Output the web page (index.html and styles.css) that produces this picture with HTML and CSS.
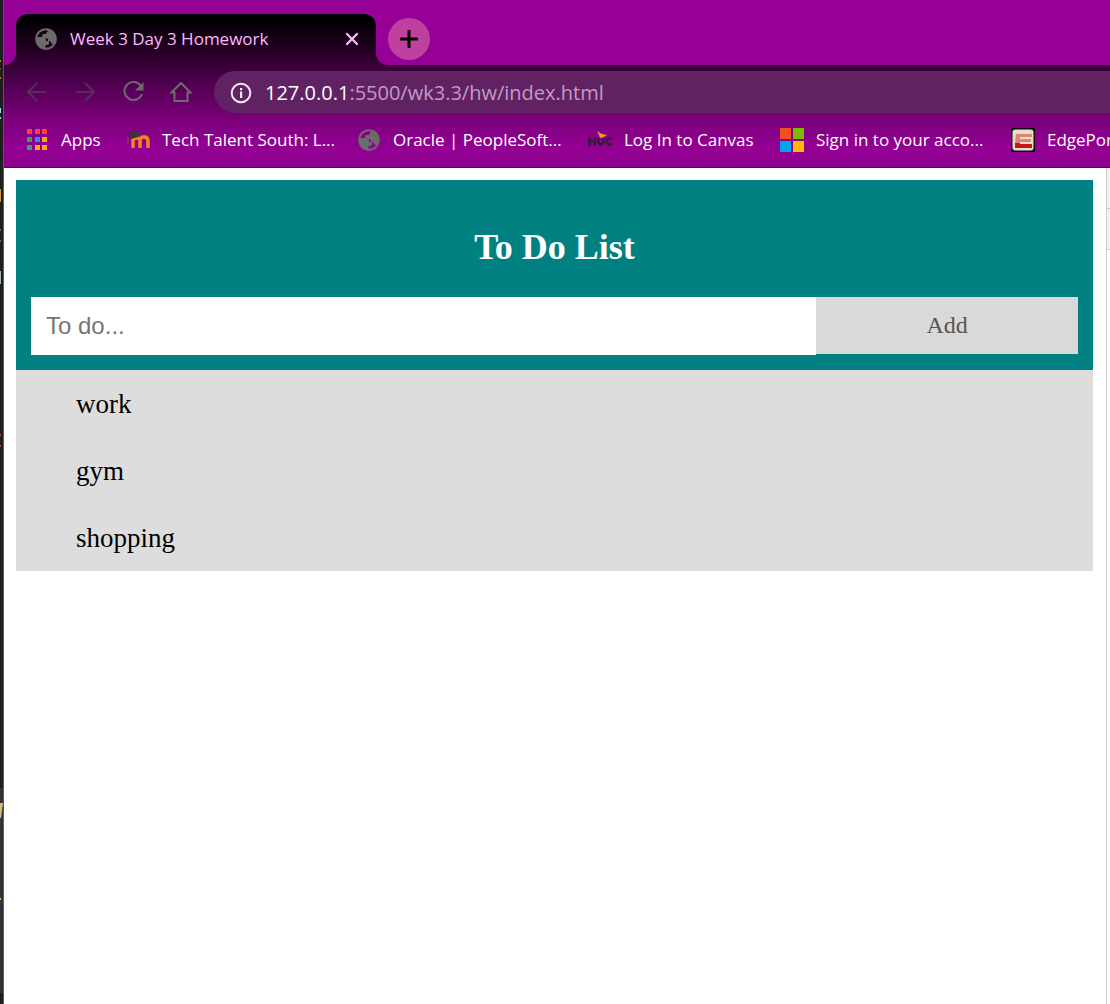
FILE: index.html
```
<!DOCTYPE html>
<html lang="en">
<head>
<meta charset="utf-8">
<title>Week 3 Day 3 Homework</title>
<link rel="stylesheet" href="styles.css">
</head>
<body>
<svg width="0" height="0" class="defs" aria-hidden="true">
  <symbol id="globe" viewBox="0 0 24 24">
    <circle cx="12" cy="12" r="9.800" fill="none" stroke="#6b6b6b" stroke-width="2"/>
    <path fill="#6b6b6b" d="M2 10h5q5 0 5 4h3v2.500q0 1.500-2 1.500h-1.500v4.500Q3 21 2 12zM13 2q8 1 9.500 9-1 4-3 6-3 0-3-3h-2.500v-2.500H10q-2 0-2-2.500 0-2 2-2h2q0-2 1.500-2z"/>
  </symbol>
</svg>
<div class="desktop">
  <svg class="editor-edge" viewBox="0 0 3 1004" width="3" height="1004" aria-hidden="true">
    <path fill="#1e1e1e" d="M0 0h3v1004H0z"/>
    <path fill="#333337" d="M0 788h3v205H0z"/>
    <path fill="#b8860b" d="M0 60h1v2H0zM0 77h1v2H0z"/>
    <path fill="#9b2d1f" d="M0 68h1v2H0z"/>
    <path fill="#9cdcfe" d="M0 108h1v5H0zM0 117h1v2H0z"/>
    <path fill="#d19a2e" d="M0 189h1v13H0z"/>
    <path fill="#6a7d20" d="M0 229h1v2H0zM0 240h1v2H0z"/>
    <path fill="#9db8a5" d="M0 271h1v13H0z"/>
    <path fill="#b5482a" d="M0 434h1v2H0zM0 445h1v2H0z"/>
    <path fill="#d7ba7d" d="M0 803h3l-2 15H0z"/>
    <path fill="#d7d060" d="M0 898h1v2H0z"/>
  </svg>
  <div class="browser">
    <header class="chrome">
      <div class="frame-top"></div>
      <div class="tabstrip">
        <div class="frame-left"></div>
        <div class="tab-slot">
          <div class="tab">
            <svg class="icon" aria-hidden="true"><use href="#globe"/></svg>
            <span class="tab-title">Week 3 Day 3 Homework</span>
            <button class="icon-button" type="button" aria-label="Close tab">
              <svg viewBox="0 0 14 14" width="14" height="14"><path d="M2 2l10 10M12 2L2 12" stroke="#ffb8ff" stroke-width="2.300" stroke-linecap="round"/></svg>
            </button>
          </div>
        </div>
        <div class="frame-right">
          <button class="new-tab" type="button" aria-label="New tab">
            <svg viewBox="0 0 18 18" width="18" height="18"><path d="M9 1v16M1 9h16" stroke="#000" stroke-width="3" stroke-linecap="round"/></svg>
          </button>
        </div>
      </div>
      <div class="toolbar">
        <button class="nav" type="button" aria-label="Back"><svg class="dim" viewBox="0 0 24 24"><path d="M21.500 12H3.500M12 3l-9 9 9 9"/></svg></button>
        <button class="nav" type="button" aria-label="Forward"><svg class="dim" viewBox="0 0 24 24"><path d="M2.500 12h18M12 3l9 9-9 9"/></svg></button>
        <button class="nav" type="button" aria-label="Reload"><svg viewBox="0 0 24 24"><path d="M20 6a9 9 0 1 0 1 8"/><path class="solid" d="M22.500 2v8.500H14z"/></svg></button>
        <button class="nav" type="button" aria-label="Home"><svg viewBox="0 0 24 24"><path d="M2.500 12.500L12 3l9.500 9.500H18.500v8.500h-13v-8.500z"/></svg></button>
        <div class="address">
          <svg viewBox="0 0 22 22" width="22" height="22" aria-hidden="true"><circle cx="11" cy="11" r="9.300" fill="none" stroke="#f3e9f3" stroke-width="2"/><path fill="#f3e9f3" d="M10 9.500h2.200V16H10zM10 6h2.200v2.200H10z"/></svg>
          <div class="url" role="textbox" aria-label="Address"><span class="host">127.0.0.1</span>:5500/wk3.3/hw/index.html</div>
        </div>
      </div>
      <nav class="bookmarks" aria-label="Bookmarks">
        <a href="#apps"><svg class="icon" viewBox="0 0 24 24"><path fill="#ff4136" d="M2 1h5v5H2zM10 1h5v5h-5zM17 1h5v5h-5z"/><path fill="#34a560" d="M2 9h5v5H2zM2 17h5v5H2z"/><path fill="#1e90ff" d="M10 9h5v5h-5z"/><path fill="#fba90a" d="M17 9h5v5h-5zM10 17h5v5h-5zM17 17h5v5h-5z"/></svg><span>Apps</span></a>
        <a href="#tts"><svg class="icon" viewBox="0 0 24 24"><path d="M7 20V10M14 20v-7q0-4 4-4t4 4v7M8 11q3-2 5 0" fill="none" stroke="#f58220" stroke-width="3.500"/><path fill="#3b3436" d="M1 7l7-4 7 1-3 3v2l-7 2-1-3z"/><path d="M2 9v7" stroke="#a03a52" stroke-width="1"/></svg><span>Tech Talent South: L...</span></a>
        <a href="#oracle"><svg class="icon" aria-hidden="true"><use href="#globe"/></svg><span>Oracle | PeopleSoft...</span></a>
        <a href="#canvas"><svg class="icon" viewBox="0 0 24 24"><path d="M1.500 9v9M7 9v9M2 13.500h5M10.500 10v5q2 3 5 0v-4M24 11q-5-2-5 2.500t5 3" fill="none" stroke="#391a3a" stroke-width="2.500"/><path fill="#e8a020" d="M9 3l5 3 5 1-3 2-4 1-1-3z"/></svg><span>Log In to Canvas</span></a>
        <a href="#signin"><svg class="icon" viewBox="0 0 24 24"><path fill="#f25022" d="M0 0h11v11H0z"/><path fill="#7fba00" d="M13 0h11v11H13z"/><path fill="#00a4ef" d="M0 13h11v11H0z"/><path fill="#ffb900" d="M13 13h11v11H13z"/></svg><span>Sign in to your acco...</span></a>
        <a href="#edge"><svg class="icon" viewBox="0 0 24 24"><path fill="#111" d="M0 0h24v24H0z"/><rect x="1.500" y="1.500" width="21" height="21" rx="3" fill="#e6dccb"/><path fill="#df8474" d="M5 6h16v3H9v2h11v3H9v2H4z"/><path fill="#c4161c" d="M4 15h5v1h12v4H4z"/></svg><span>EdgePor</span></a>
      </nav>
    </header>
    <div class="viewport">
      <main class="page">
        <form class="todo-header">
          <h2>To Do List</h2>
          <div class="entry">
            <input type="text" placeholder="To do..." aria-label="To do">
            <button type="button">Add</button>
          </div>
        </form>
        <ul class="todo-list">
          <li>work</li>
          <li>gym</li>
          <li>shopping</li>
        </ul>
      </main>
      <aside class="devtools" aria-label="Developer tools"><div></div><div></div></aside>
    </div>
  </div>
</div>
</body>
</html>
```
FILE: styles.css
```
* { box-sizing: border-box; }
body { margin: 0; background: #fff; overflow: hidden; }
button { border: 0; padding: 0; background: none; font: inherit; }
svg { flex: none; display: block; }
.defs { position: absolute; }

.desktop { display: flex; height: 100vh; overflow: hidden; }
.editor-edge { background: #1e1e1e; }
.browser {
  flex: 1;
  min-width: 0;
  display: flex;
  flex-direction: column;
  border-left: 1px solid #3d6683;
}

.chrome {
  font-family: "Open Sans", "Noto Sans", sans-serif;
  color: #fff;
  border-bottom: 1px solid #5c005c;
  background: linear-gradient(#000 20px, #3b003b 68px, #730073 112px, #940094 148px, #8c008c 168px);
}
.frame-top { height: 14px; background: #960096; }
.tabstrip { display: flex; height: 51px; }
.frame-left { width: 12px; background: #960096; border-bottom-right-radius: 12px; }
.tab-slot { width: 360px; background: linear-gradient(#960096 20px, transparent 20px); }
.tab {
  height: 51px;
  display: flex;
  align-items: center;
  gap: 12px;
  padding: 0 17px 2px 18px;
  border-radius: 12px 12px 0 0;
  background: linear-gradient(#000 6px, #3b003b 54px);
  background-size: 100% 54px;
}
.icon { width: 24px; height: 24px; }
.tab-title { flex: 1; font-size: 17px; line-height: 24px; color: #ffb8ff; white-space: nowrap; }
.frame-right { flex: 1; padding: 4px 12px; background: #960096; border-bottom-left-radius: 12px; }
.new-tab {
  width: 42px;
  height: 42px;
  border-radius: 50%;
  background: #c040a0;
  display: grid;
  place-items: center;
}
.toolbar { display: flex; padding: 6px 0 0 9px; }
.nav { width: 48px; height: 42px; display: grid; place-items: center; }
.nav svg { width: 24px; height: 24px; fill: none; stroke: #6b6b6b; stroke-width: 2; }
.nav .dim { stroke: #5a2a5a; }
.nav .solid { fill: #6b6b6b; stroke: none; }
.address {
  flex: 1;
  margin-left: 9px;
  height: 42px;
  padding: 2px 0 0 16px;
  display: flex;
  align-items: center;
  gap: 13px;
  border-radius: 21px 0 0 21px;
  background: #602262;
}
.url { font-size: 20px; line-height: 28px; color: #c39bc5; white-space: nowrap; }
.host { color: #fff; }
.bookmarks {
  display: grid;
  grid-template-columns: 101px 231px 231px 192px 231px 1fr;
  height: 54px;
  padding-left: 21px;
}
.bookmarks a {
  display: flex;
  align-items: center;
  gap: 12px;
  color: #fff;
  font-size: 17px;
  line-height: 24px;
  text-decoration: none;
  white-space: nowrap;
}

.viewport { flex: 1; display: flex; background: #fff; }
.page { flex: 1; padding: 12px 13px 12px 12px; font-family: "Liberation Serif", "Times New Roman", serif; }
.todo-header { padding: 45px 15px 15px; background: #008080; }
.todo-header h2 { margin: 0 0 28px; font-size: 36px; line-height: 44px; color: #fff; text-align: center; }
.entry { display: flex; align-items: flex-start; }
.entry input {
  width: 75%;
  height: 58px;
  padding: 0 15px;
  border: 0;
  font: 24px "Liberation Sans", Arial, sans-serif;
}
.entry input::placeholder { color: #757575; }
.entry button { width: 25%; height: 57px; background: #d9d9d9; color: #555; font-size: 24px; }
.todo-list { margin: 0; padding: 0; list-style: none; background: #ddd; }
.todo-list li { padding: 19px 60px 17px; font-size: 27px; line-height: 31px; }
.devtools { width: 4px; border-left: 1px solid #ccc; }
.devtools div { height: 41px; background: #f3f3f3; border-bottom: 1px solid #ccc; }
```
